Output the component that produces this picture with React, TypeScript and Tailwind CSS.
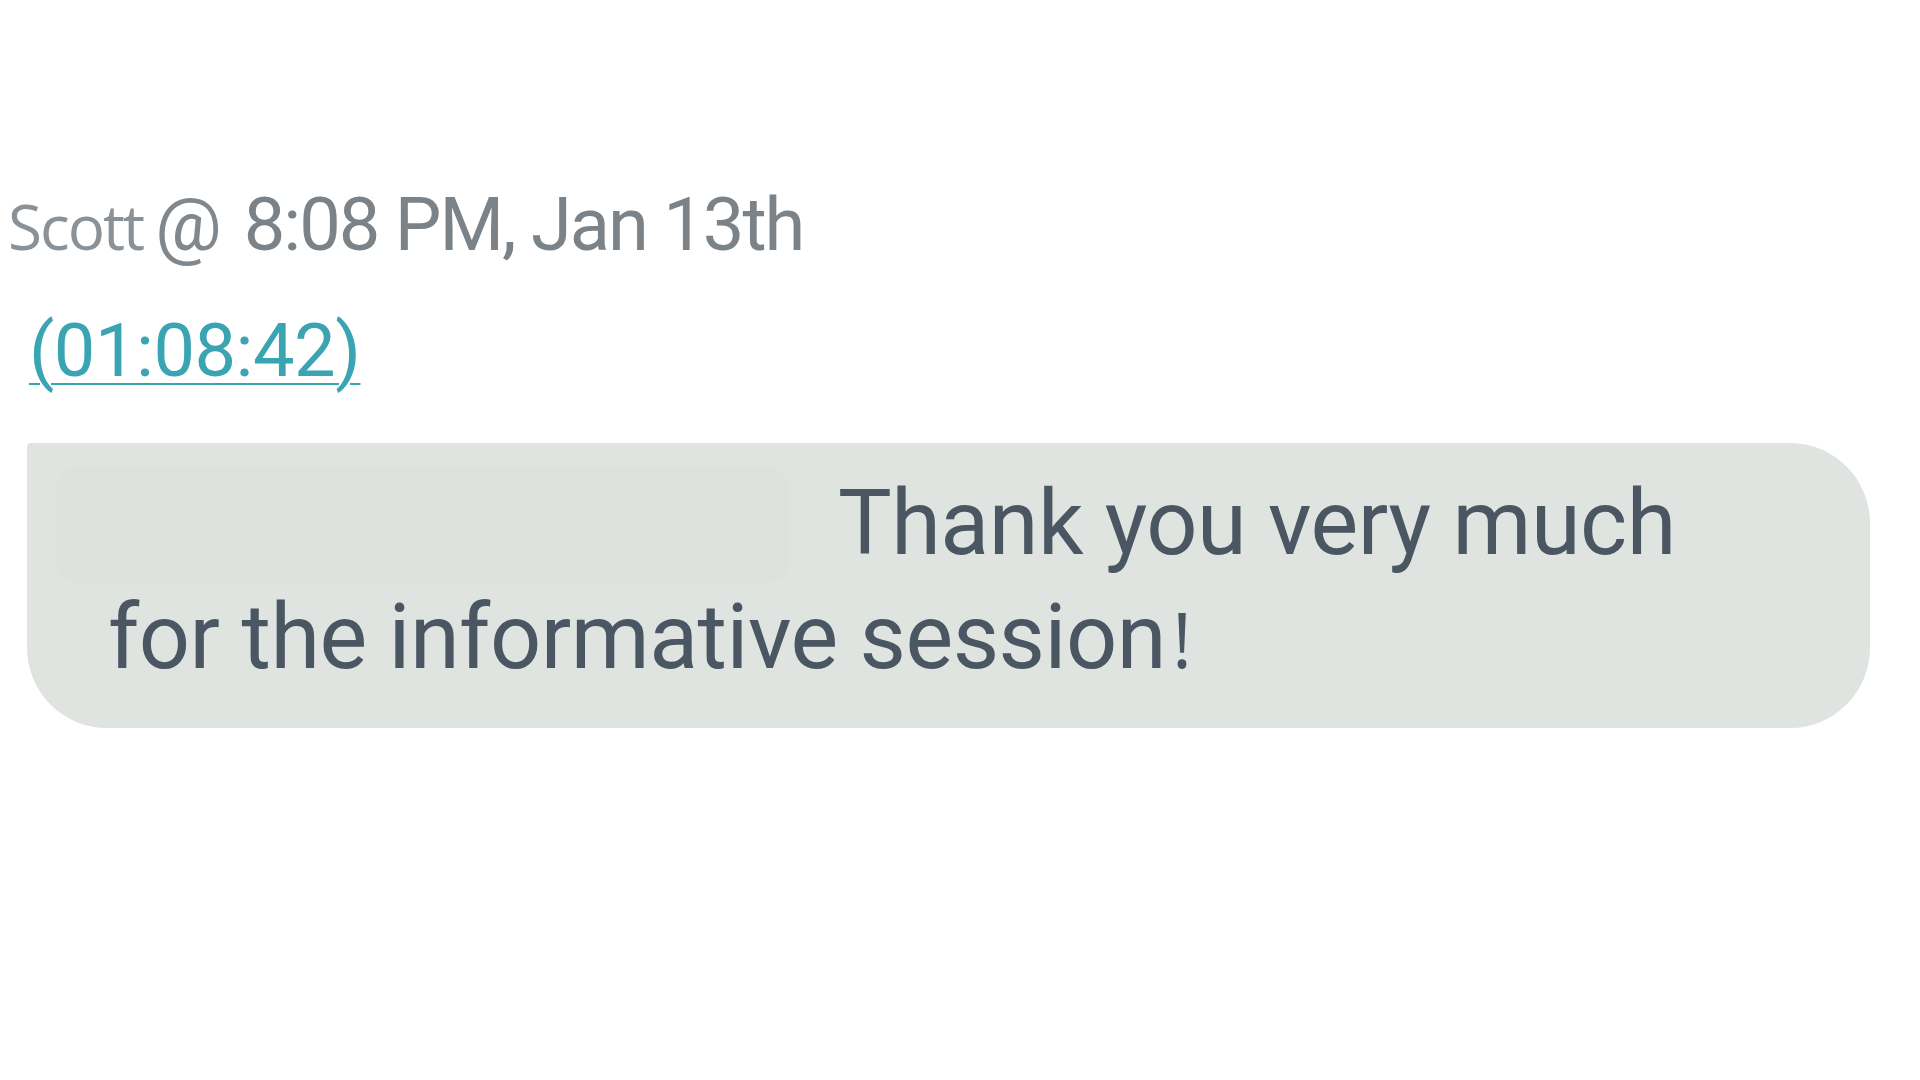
import React from 'react';

const App: React.FC = () => {
    return (
        <div className="min-h-screen bg-white pt-[188px]">
            {/* Header */}
            <div className="flex items-baseline pl-[8px] leading-none">
                <span
                    className="text-[62px] text-[#8b9297] tracking-[-2px]"
                    style={{ fontFamily: '"Open Sans", sans-serif' }}
                >
                    Scott
                </span>
                <span
                    className="ml-[12px] text-[74px] text-[#80888d]"
                    style={{ fontFamily: 'Roboto, sans-serif' }}
                >
                    @
                </span>
                <span
                    className="ml-[22px] text-[74px] text-[#7b8388] tracking-[-2px]"
                    style={{ fontFamily: 'Roboto, sans-serif' }}
                >
                    8:08 PM, Jan 13th
                </span>
            </div>

            {/* Timestamp link */}
            <div className="mt-[52px] pl-[29px] leading-none">
                <a
                    href="#"
                    className="text-[74px] text-[#3aa4b2] underline decoration-2 underline-offset-[7px] tracking-[-0.5px]"
                    style={{ fontFamily: 'Roboto, sans-serif' }}
                >
                    (01:08:42)
                </a>
            </div>

            {/* Message bubble */}
            <div
                className="mt-[55px] ml-[27px] w-[1843px] h-[285px] bg-[#e0e4e1] rounded-tl-[4px] rounded-tr-[80px] rounded-br-[80px] rounded-bl-[80px] text-[#4b5663] text-[90px] leading-[115px] tracking-[-0.5px]"
                style={{ fontFamily: 'Roboto, sans-serif' }}
            >
                <div className="flex items-start">
                    <div className="ml-[28px] mt-[23px] w-[735px] h-[117px] rounded-[24px] bg-[#dee2df] shrink-0" />
                    <span className="ml-[48px] mt-[23px]">Thank you very much</span>
                </div>
                <div className="pl-[81px] -mt-[3px]">
                    for the informative session
                    <span style={{ fontFamily: '"Open Sans", sans-serif' }} className="ml-[6px] text-[76px] tracking-normal">!</span>
                </div>
            </div>
        </div>
    );
};

export default App;
